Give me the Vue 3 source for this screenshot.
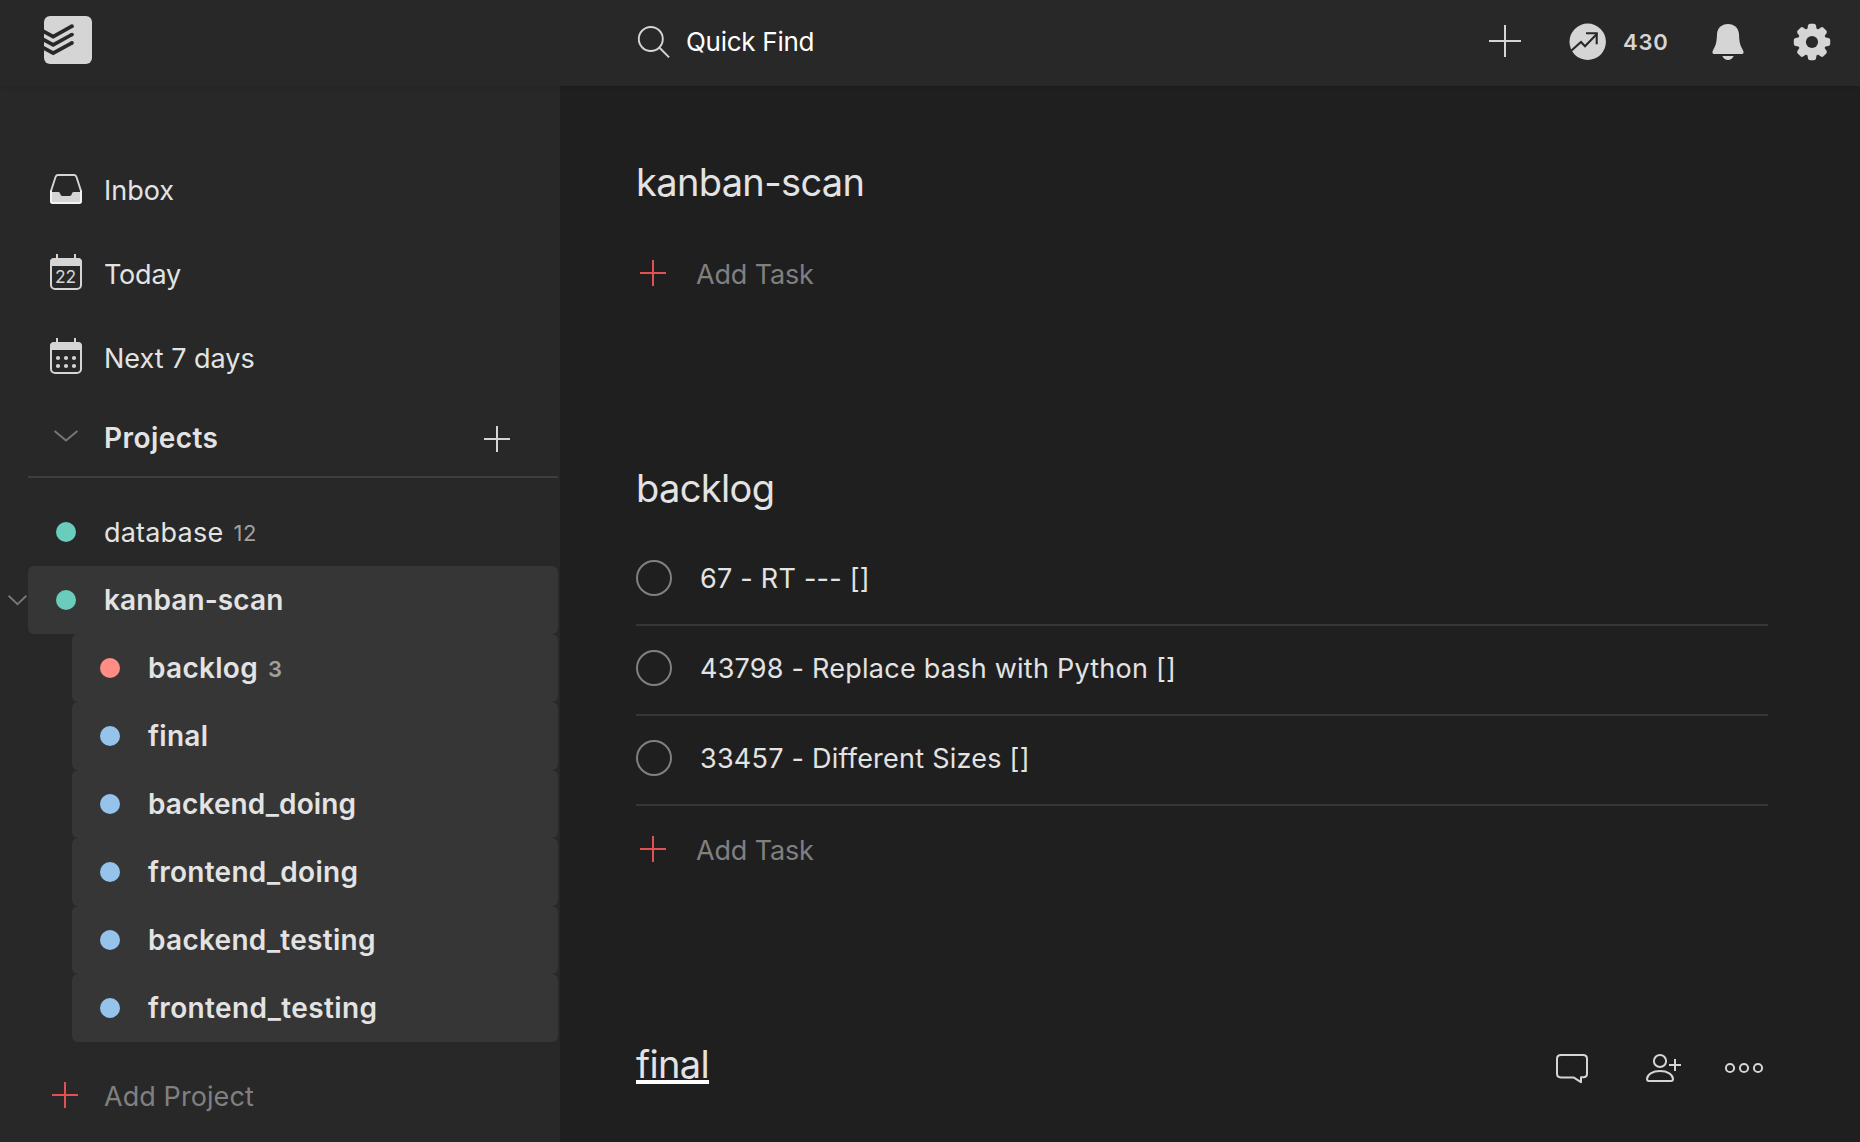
<script setup>
const children = [
  { name: 'backlog', count: 3, tone: 'red', fit: 'wide' },
  { name: 'final', tone: 'blue', fit: 'wide' },
  { name: 'backend_doing', tone: 'blue', fit: 'snug' },
  { name: 'frontend_doing', tone: 'blue', fit: 'wide' },
  { name: 'backend_testing', tone: 'blue', fit: 'wide' },
  { name: 'frontend_testing', tone: 'blue', fit: 'wider' }
]
const tasks = ['67 - RT --- []', '43798 - Replace bash with Python []', '33457 - Different Sizes []']
const teeth = [0, 45, 90, 135, 180, 225, 270, 315]
</script>

<template>
  <div class="app">
    <header class="topbar">
      <svg class="logo" width="48" height="48" viewBox="0 0 48 48">
        <rect width="48" height="48" rx="6" fill="#d5d5d5" />
        <g fill="none" stroke="#282828" stroke-width="3.7" stroke-linejoin="miter">
          <path d="M-1 15l10.200 5.600L28 10.200" />
          <path d="M-1 23.300l10.200 5.600L28 18.500" />
          <path d="M-1 31.600l10.200 5.600L28 26.800" />
        </g>
        <g fill="#282828"><circle cx="28" cy="10.200" r="1.850" /><circle cx="28" cy="18.500" r="1.850" /><circle cx="28" cy="26.800" r="1.850" /></g>
      </svg>
      <div class="search">
        <svg width="34" height="34" viewBox="0 0 34 34" fill="none" stroke="#d5d5d5" stroke-width="1.900">
          <circle cx="14.800" cy="14" r="12" /><path d="M23.300 22.500l9.800 9.800" />
        </svg>
        <span>Quick Find</span>
      </div>
      <nav class="actions">
        <svg class="add" width="32" height="32" viewBox="0 0 32 32" stroke="#d5d5d5" stroke-width="2"><path d="M0 16h32M16 0v32" /></svg>
        <svg class="karma" width="38" height="38" viewBox="0 0 38 38">
          <circle cx="18.700" cy="18.800" r="18.200" fill="#d5d5d5" />
          <g fill="none" stroke="#282828" stroke-width="2.100"><path d="M2.500 27.500L12 19l4 4.200L28.300 10.500" /><path d="M17 10.300h10.700v11" /></g>
        </svg>
        <span class="points">430</span>
        <svg class="bell" width="32" height="37" viewBox="0 0 32 37" fill="#d5d5d5">
          <path d="M16 0C9.500 0 5.300 4.200 5 10C4.700 18 4.200 20.500 1 26.300C0 28.500 .3 30 2 30H30C31.700 30 32 28.500 31 26.300C27.800 20.500 27.300 18 27 10C26.700 4.200 22.500 0 16 0Z" />
          <path d="M10.300 32H21.700C20.500 34.800 18.500 35.900 16 35.900S11.500 34.800 10.300 32Z" />
        </svg>
        <svg class="gear" width="38" height="38" viewBox="0 0 38 38">
          <g fill="#d5d5d5">
            <circle cx="19" cy="19" r="14" />
            <path v-for="a in teeth" :key="a" :transform="`rotate(${a} 19 19)`" d="M14 8L15 2.500Q15.400 .8 17 .8H21Q22.600 .8 23 2.500L24 8Z" />
          </g>
          <circle cx="19" cy="19" r="6.100" fill="#282828" />
        </svg>
      </nav>
    </header>

    <div class="body">
      <aside class="sidebar">
        <ul class="filters">
          <li>
            <svg width="32" height="36" viewBox="0 0 32 36">
              <path d="M1 19L5.600 4.800Q6.300 3 8 3H24Q25.700 3 26.400 4.800L31 19V29.500Q31 31 28.500 31H3.500Q1 31 1 29.500Z" fill="none" stroke="#d5d5d5" stroke-width="1.900" />
              <path d="M1 20H8.500Q9.800 20 10.100 21.500Q10.500 24 12.500 24H19.500Q21.500 24 21.900 21.500Q22.200 20 23.500 20H31V30Q31 31 29 31H3Q1 31 1 30Z" fill="#d5d5d5" />
              <path d="M1 18.500V29Q1 31 3.500 31H28.500Q31 31 31 29V18.500" fill="none" stroke="#f4f4f4" stroke-width="1.900" />
            </svg>
            <span>Inbox</span>
          </li>
          <li>
            <svg class="calendar" width="32" height="36" viewBox="0 0 32 36">
              <rect x="1" y="5" width="30" height="30" rx="4" fill="none" stroke="#d5d5d5" stroke-width="2" />
              <path d="M0 12V8Q0 4 4 4H28Q32 4 32 8V12Z" fill="#d5d5d5" />
              <path d="M7 0V5M25 0V5" stroke="#d5d5d5" stroke-width="2" />
              <text x="15.600" y="29" text-anchor="middle" font-size="17.500" fill="#d5d5d5">22</text>
            </svg>
            <span class="t-today">Today</span>
          </li>
          <li>
            <svg class="calendar" width="32" height="36" viewBox="0 0 32 36">
              <rect x="1" y="5" width="30" height="30" rx="4" fill="none" stroke="#d5d5d5" stroke-width="2" />
              <path d="M0 12V8Q0 4 4 4H28Q32 4 32 8V12Z" fill="#d5d5d5" />
              <path d="M7 0V5M25 0V5" stroke="#d5d5d5" stroke-width="2" />
              <g fill="#d5d5d5">
                <circle v-for="n in 6" :key="n" :cx="8 + ((n - 1) % 3) * 8" :cy="n > 3 ? 28 : 20" r="2.100" />
              </g>
            </svg>
            <span>Next 7 days</span>
          </li>
        </ul>

        <div class="section">
          <svg width="24" height="12" viewBox="0 0 24 12" fill="none" stroke="#777" stroke-width="1.900"><path d="M.6 .9L12 10.400L23.400 .9" /></svg>
          <span class="section-name">Projects</span>
          <svg class="section-add" width="26" height="26" viewBox="0 0 26 26" stroke="#d5d5d5" stroke-width="2"><path d="M0 13h26M13 0v26" /></svg>
        </div>

        <div class="projects">
          <div class="project"><i class="dot teal"></i><span class="t-database">database</span><small>12</small></div>
          <div class="parent">
            <svg class="collapse" width="19" height="11" viewBox="0 0 19 11" fill="none" stroke="#777" stroke-width="1.900"><path d="M.6 .7L9.500 9.200L18.400 .7" /></svg>
            <div class="project active"><i class="dot teal"></i><span class="t-parent">kanban-scan</span></div>
          </div>
          <div v-for="c in children" :key="c.name" class="project active child">
            <i class="dot" :class="c.tone"></i><span :class="c.fit">{{ c.name }}</span><small v-if="c.count">{{ c.count }}</small>
          </div>
        </div>

        <div class="add-project">
          <svg width="26" height="26" viewBox="0 0 26 26" stroke="#e05252" stroke-width="2"><path d="M0 13h26M13 0v26" /></svg>
          <span>Add Project</span>
        </div>
      </aside>

      <main class="content">
        <section class="first">
          <h2>kanban-scan</h2>
          <div class="add-task">
            <svg width="26" height="26" viewBox="0 0 26 26" stroke="#e05252" stroke-width="2"><path d="M0 13h26M13 0v26" /></svg>
            <span>Add Task</span>
          </div>
        </section>
        <section class="second">
          <h2>backlog</h2>
          <ul class="tasks">
            <li v-for="t in tasks" :key="t"><i class="check"></i><span>{{ t }}</span></li>
          </ul>
          <div class="add-task">
            <svg width="26" height="26" viewBox="0 0 26 26" stroke="#e05252" stroke-width="2"><path d="M0 13h26M13 0v26" /></svg>
            <span>Add Task</span>
          </div>
        </section>
        <section class="third">
          <h2 class="link">final</h2>
          <div class="tools">
            <svg width="32" height="30" viewBox="0 0 32 30" fill="none" stroke="#d5d5d5" stroke-width="2">
              <path d="M5 1H27Q31 1 31 5V19.500Q31 23.200 27.500 23.200H25V28.200L17.500 23.400H5Q1 23.400 1 19.500V5Q1 1 5 1Z" stroke-linejoin="round" />
            </svg>
            <svg class="share" width="36" height="30" viewBox="0 0 36 30" fill="none" stroke="#d5d5d5" stroke-width="2">
              <circle cx="14" cy="7" r="6.100" />
              <path d="M3 27H25Q27 27 27 25C27 20.500 21.500 17 14 17S1 20.500 1 25Q1 27 3 27Z" />
              <path d="M23 11H35M29 5V17" />
            </svg>
            <svg class="more" width="40" height="10" viewBox="0 0 40 10" fill="none" stroke="#d5d5d5" stroke-width="2">
              <circle cx="6" cy="5" r="4.100" /><circle cx="20" cy="5" r="4.100" /><circle cx="34" cy="5" r="4.100" />
            </svg>
          </div>
        </section>
      </main>
    </div>
  </div>
</template>

<style>
body { margin: 0; background: #1f1f1f; }
</style>

<style scoped>
.app {
  height: 1142px;
  display: flex;
  flex-direction: column;
  overflow: hidden;
  background: #1f1f1f;
  color: #e3e3e3;
  font: 400 27px/34px Inter, "Liberation Sans", sans-serif;
  white-space: nowrap;
}
svg { display: block; flex: none; overflow: visible; }
.logo { overflow: hidden; }
ul { list-style: none; margin: 0; padding: 0; }
h2 { margin: 0; font-weight: 400; font-size: 38px; line-height: 48px; letter-spacing: -0.65px; }

.topbar {
  flex: none;
  height: 86px;
  box-sizing: border-box;
  padding: 16px 29px 0 44px;
  display: flex;
  align-items: flex-start;
  background: #282828;
  box-shadow: 0 1px 4px rgba(0, 0, 0, 0.12);
  z-index: 1;
}
.search { display: flex; margin: 9px 0 0 544px; color: #fff; }
.search svg { margin-top: 0; }
.search span { margin: 0 0 0 16px; font-size: 26px; letter-spacing: -0.28px; }
.actions { display: flex; align-items: flex-start; margin-left: auto; }
.add { margin-top: 9px; }
.karma { margin: 6.500px 0 0 48px; }
.points { margin: 9px 0 0 16px; width: 89px; font-size: 22px; font-weight: 600; letter-spacing: 0.8px; color: #d5d5d5; }
.bell { margin-top: 8px; }
.gear { margin: 7px 0 0 49px; }

.body { flex: 1; display: flex; min-height: 0; }
.sidebar { width: 560px; flex: none; box-sizing: border-box; padding: 62px 2px 0 28px; background: #282828; }
.filters li { height: 84px; display: flex; align-items: center; padding-left: 22px; }
.filters span { margin: 2px 0 0 22px; }
.calendar { margin-bottom: 4px; }
.t-today { letter-spacing: -0.2px; }

.section {
  height: 76px;
  display: flex;
  align-items: center;
  padding: 0 48px 0 26px;
  border-bottom: 2px solid #3d3d3d;
  margin-bottom: 20px;
}
.section > svg:first-child { margin-top: -4px; }
.section-name { margin-left: 26px; font-size: 28px; font-weight: 600; letter-spacing: 0.450px; }
.section-add { margin: 2px 0 0 auto; }

.project { height: 68px; display: flex; align-items: center; padding-left: 28px; }
.project span { margin-left: 28px; }
.project small { margin: 2px 0 0 10px; font-size: 22px; color: #a0a0a0; letter-spacing: 0.800px; }
.project .t-database { letter-spacing: 0.200px; margin-top: 2px; }
.t-parent { letter-spacing: 0.1px; }
.active { background: #363636; border-radius: 6px; font-size: 28px; font-weight: 600; }
.child { margin-left: 44px; }
.snug { letter-spacing: 0.120px; }
.wide { letter-spacing: 0.280px; }
.wider { letter-spacing: 0.380px; }
.dot { width: 20px; height: 20px; border-radius: 50%; flex: none; }
.teal { background: #6accbc; }
.red { background: #ff8d85; }
.blue { background: #96c3eb; }
.parent { position: relative; }
.collapse { position: absolute; left: -20px; top: 29px; }
.add-project { display: flex; align-items: center; padding: 36px 0 0 24px; color: #808080; }
.add-project svg { margin-bottom: 2px; }
.add-project span { margin: 2px 0 0 26px; letter-spacing: 0.080px; }

.content { flex: 1; padding: 72px 92px 0 76px; }
.first { height: 306px; }
.add-task { display: flex; align-items: center; height: 36px; padding-left: 4px; color: #808080; }
.add-task span { margin: 2px 0 0 30px; padding-top: 2px; letter-spacing: -0.150px; }
.first .add-task { margin-top: 49px; }
.second { height: 576px; }
.tasks { margin-top: 24px; }
.tasks li { height: 88px; display: flex; align-items: center; border-bottom: 2px solid #363636; }
.check { width: 32px; height: 32px; border: 2px solid #808080; border-radius: 50%; margin-top: -4px; }
.tasks span { margin: -2px 0 0 28px; letter-spacing: 0.240px; }
.second .add-task { margin-top: 25px; }
.third { display: flex; justify-content: space-between; }
.link { text-decoration: underline; text-decoration-color: #fff; text-decoration-thickness: 4px; text-underline-offset: 2px; text-decoration-skip-ink: none; }
.tools { display: flex; padding: 14px 4px 0 0; }
.share { margin-left: 58px; }
.more { margin: 9px 0 0 42px; }
</style>
